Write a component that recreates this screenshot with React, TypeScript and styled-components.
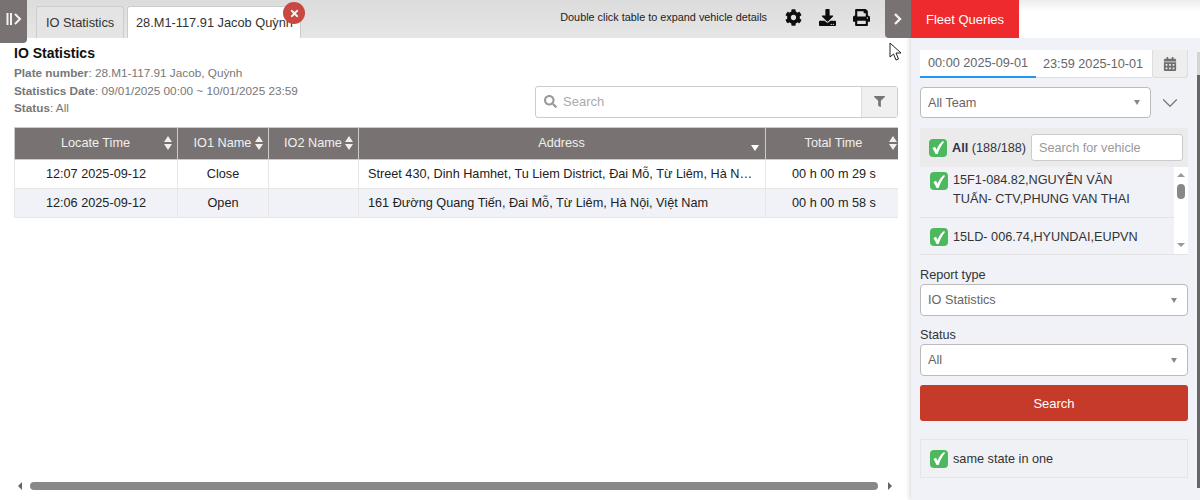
import { FaCalendarAlt, FaCog, FaDownload, FaFilter, FaPrint, FaSearch, FaTimes } from "react-icons/fa"
import { FiChevronDown } from "react-icons/fi"
import styled, { createGlobalStyle } from "styled-components"

const GlobalStyle = createGlobalStyle`
  html, body {
    margin: 0;
    height: 500px;
    overflow: hidden;
    background: #fff;
    font-family: "Liberation Sans", Arial, sans-serif;
  }
  * { box-sizing: border-box; }
`

const Page = styled.div`
  position: relative;
  display: flex;
  width: 1200px;
  height: 500px;
  overflow: hidden;
`

const Main = styled.div`
  width: 911px;
  display: flex;
  flex-direction: column;
`

const TopBar = styled.div`
  height: 38px;
  display: flex;
  align-items: flex-start;
  background: linear-gradient(#dcdcdc, #e6e6e6);
`

const EdgeButton = styled.div<{ $side: "left" | "right" }>`
  width: ${(p) => (p.$side === "left" ? "27px" : "26px")};
  height: ${(p) => (p.$side === "left" ? "43px" : "38px")};
  padding-bottom: ${(p) => (p.$side === "left" ? "5px" : "0")};
  background: #787372;
  color: #f2f2f2;
  display: flex;
  align-items: center;
  justify-content: center;
  z-index: 2;
  border-radius: ${(p) => (p.$side === "left" ? "0 0 4px 0" : "0 0 0 4px")};
  flex: none;
`

const Tabs = styled.div`
  display: flex;
  gap: 3px;
  padding: 6px 0 0 9px;
`

const Tab = styled.div<{ $active?: boolean }>`
  position: relative;
  width: ${(p) => (p.$active ? "174px" : "88px")};
  height: 32px;
  padding: 0 ${(p) => (p.$active ? "8px" : "9px")};
  display: flex;
  align-items: center;
  font-size: 12.8px;
  color: #333;
  white-space: nowrap;
  border: 1px solid #ccc;
  border-bottom: 0;
  border-radius: 3px 3px 0 0;
  background: ${(p) => (p.$active ? "#fff" : "#e4e4e4")};
`

const CloseBadge = styled.span`
  position: absolute;
  top: -5px;
  right: -5px;
  width: 22px;
  height: 22px;
  border-radius: 50%;
  background: #c9483f;
  color: #f4f4f4;
  display: flex;
  align-items: center;
  justify-content: center;
  font-size: 11px;
`

const Hint = styled.div`
  margin-left: auto;
  height: 34px;
  display: flex;
  align-items: center;
  gap: 18px;
  font-size: 10.85px;
  color: #222;
`

const HintIcons = styled.div`
  display: flex;
  align-items: center;
  gap: 17px;
  font-size: 17px;
  color: #0d0d0d;
  margin-right: 15px;
`

const Content = styled.div`
  flex: 1;
  padding: 7px 13px 0 14px;
  min-height: 0;
`

const Title = styled.h1`
  margin: 0 0 2px;
  font-size: 14px;
  line-height: 17px;
  font-weight: 700;
  color: #111;
`

const InfoRow = styled.div`
  display: flex;
  justify-content: space-between;
  align-items: flex-end;
  margin-bottom: 9px;
`

const MetaBlock = styled.div`
  padding-bottom: 1px;
`

const MetaLine = styled.div`
  font-size: 11.75px;
  line-height: 17.5px;
  color: #777;
  b { font-weight: 700; }
`

const SearchBox = styled.div`
  width: 363px;
  height: 32px;
  display: flex;
  align-items: center;
  border: 1px solid #ccc;
  border-radius: 3px;
  background: #fff;
  color: #999;
  font-size: 13px;
`

const SearchLabel = styled.div`
  flex: 1;
  display: flex;
  align-items: center;
  gap: 6px;
  padding-left: 8px;
  color: #aaa;
  svg { color: #999; }
`

const FilterButton = styled.div`
  width: 36px;
  height: 100%;
  display: flex;
  align-items: center;
  justify-content: center;
  background: #f0f0f0;
  border-left: 1px solid #ddd;
  color: #777;
  font-size: 11px;
`

const TableClip = styled.div`
  width: 884px;
  overflow: hidden;
`

const Table = styled.table`
  width: 888px;
  border-collapse: collapse;
  table-layout: fixed;
  font-size: 12.7px;
  color: #222;
`

const Th = styled.th`
  position: relative;
  height: 32px;
  padding: 0 9px 0 8px;
  background: #787372;
  color: #f0f0f0;
  font-size: 12.7px;
  font-weight: 400;
  border: 1px solid #ccc;
`

const SortMark = styled.span<{ $right: number }>`
  position: absolute;
  top: 8px;
  right: ${(p) => p.$right}px;
  display: flex;
  flex-direction: column;
  gap: 2px;
`

const DownMark = styled.span`
  position: absolute;
  bottom: 8px;
  right: 6px;
  width: 0;
  height: 0;
  border: 4px solid transparent;
  border-top: 6px solid #fff;
  border-bottom: 0;
`

const Arrow = styled.i<{ $up?: boolean }>`
  display: block;
  width: 0;
  height: 0;
  border-left: 4px solid transparent;
  border-right: 4px solid transparent;
  ${(p) => (p.$up ? "border-bottom: 6px solid #f0f0f0;" : "border-top: 6px solid #f0f0f0;")}
`

const Row = styled.tr<{ $odd?: boolean }>`
  background: ${(p) => (p.$odd ? "#f0f2f7" : "#fff")};
`

const Td = styled.td<{ $left?: boolean }>`
  height: 29px;
  padding: ${(p) => (p.$left ? "0 11px 0 9px" : "0 9px")};
  text-align: ${(p) => (p.$left ? "left" : "center")};
  border: 1px solid #e6e6e6;
  white-space: nowrap;
  overflow: hidden;
  text-overflow: ellipsis;
`

const HScroll = styled.div`
  height: 22px;
  padding: 0 19px 6px 18px;
  display: flex;
  align-items: center;
  gap: 8px;
`

const HThumb = styled.div`
  flex: 1;
  height: 8px;
  margin-right: 2px;
  border-radius: 4px;
  background: #888;
`

const ScrollArrow = styled.i<{ $dir: "left" | "right" | "up" | "down" }>`
  display: block;
  width: 0;
  height: 0;
  flex: none;
  ${(p) => p.$dir === "left" && "border-top: 4px solid transparent; border-bottom: 4px solid transparent; border-right: 4px solid #666;"}
  ${(p) => p.$dir === "right" && "border-top: 4px solid transparent; border-bottom: 4px solid transparent; border-left: 4px solid #666;"}
  ${(p) => p.$dir === "up" && "border-left: 4px solid transparent; border-right: 4px solid transparent; border-bottom: 4px solid #999;"}
  ${(p) => p.$dir === "down" && "border-left: 4px solid transparent; border-right: 4px solid transparent; border-top: 4px solid #999;"}
`

const Panel = styled.aside`
  width: 289px;
  display: flex;
  flex-direction: column;
  box-shadow: -2px 0 4px rgba(0, 0, 0, 0.12);
  z-index: 1;
`

const PanelHead = styled.div`
  height: 38px;
  flex: none;
  background: linear-gradient(#ececec, #fff 30%);
`

const RedTab = styled.div`
  width: 108px;
  height: 38px;
  background: #ee2a2c;
  color: #fff;
  font-size: 13px;
  display: flex;
  align-items: center;
  justify-content: center;
`

const PanelBody = styled.div`
  flex: 1;
  background: #f0f2f7;
  display: flex;
  flex-direction: column;
  padding: 12px 12px 0 9px;
  position: relative;
`

const PanelScroll = styled.div`
  position: absolute;
  top: 14px;
  right: 0;
  width: 3px;
  height: 436px;
  background: linear-gradient(#d4d4d4 23px, #666 23px);
`

const DateRow = styled.div`
  display: flex;
  height: 28px;
  margin-bottom: 9px;
`

const DateInput = styled.div<{ $focus?: boolean }>`
  width: 116px;
  background: #fff;
  font-size: 12.7px;
  color: #666;
  display: flex;
  align-items: center;
  padding-left: ${(p) => (p.$focus ? "8px" : "7px")};
  border-bottom: 1px solid #ddd;
  ${(p) => p.$focus && "border-bottom: 2px solid #2196f3;"}
`

const CalendarButton = styled.div`
  flex: 1;
  display: flex;
  align-items: center;
  justify-content: center;
  background: #eee;
  border: 1px solid #ddd;
  border-top: 0;
  border-radius: 0 0 3px 3px;
  color: #6e6e70;
  font-size: 14px;
`

const TeamRow = styled.div`
  display: flex;
  align-items: center;
  margin-bottom: 10px;
`

const Select = styled.div<{ $wide?: boolean }>`
  width: ${(p) => (p.$wide ? "268px" : "231px")};
  height: ${(p) => (p.$wide ? "32px" : "31px")};
  padding: 0 8px 0 7px;
  display: flex;
  align-items: center;
  justify-content: space-between;
  background: #fff;
  border: 1px solid #bbb;
  border-radius: 4px;
  font-size: 12.7px;
  color: #666;
`

const Caret = styled.i`
  width: 0;
  height: 0;
  border-left: 3.5px solid transparent;
  border-right: 3.5px solid transparent;
  border-top: 5px solid #888;
  margin-right: 2px;
`

const ChevronSlot = styled.div`
  flex: 1;
  display: flex;
  justify-content: center;
  color: #777;
  font-size: 26px;
`

const VehicleHead = styled.div`
  height: 39px;
  display: flex;
  align-items: center;
  gap: 5px;
  padding: 0 5px 0 9px;
  background: #ebebeb;
  font-size: 12.7px;
  color: #334;
  b { font-weight: 700; }
`

const Check = styled.span`
  width: 18px;
  height: 18px;
  flex: none;
  border-radius: 4px;
  background: #4eb85f;
  display: flex;
  align-items: center;
  justify-content: center;
`

const VehicleSearch = styled.div`
  margin-left: auto;
  width: 152px;
  height: 27px;
  padding-left: 7px;
  display: flex;
  align-items: center;
  background: #fff;
  border: 1px solid #ccc;
  border-radius: 3px;
  color: #999;
  font-size: 12.7px;
`

const VehicleList = styled.div`
  height: 88px;
  display: flex;
  overflow: hidden;
  border-bottom: 1px solid #e3e3e3;
  margin-bottom: 10px;
`

const VehicleItems = styled.div`
  flex: 1;
  overflow: hidden;
`

const VehicleItem = styled.div`
  display: flex;
  gap: 5px;
  padding: 4px 25px 8px 10px;
  font-size: 12.7px;
  line-height: 19px;
  color: #333;
  ${Check} { margin-top: 1px; }
  & + & {
    border-top: 1px solid #e3e3e3;
    padding-top: 10px;
  }
  & + & ${Check} { margin-top: 0; }
`

const VScroll = styled.div`
  width: 14px;
  flex: none;
  background: #fff;
  display: flex;
  flex-direction: column;
  align-items: center;
  padding: 6px 0 7px;
`

const VThumb = styled.div`
  width: 8px;
  height: 15px;
  margin-top: 7px;
  border-radius: 4px;
  background: #888;
  margin-bottom: auto;
`

const FieldLabel = styled.div`
  font-size: 12.7px;
  line-height: 14px;
  color: #333;
  margin: 3px 0 2px;
`

const Field = styled.div`
  margin-bottom: 9px;
`

const SearchButton = styled.div`
  height: 36px;
  margin-bottom: 18px;
  border-radius: 3px;
  background: #c63a2a;
  color: #fff;
  font-size: 13px;
  display: flex;
  align-items: center;
  justify-content: center;
`

const SameState = styled.div`
  height: 39px;
  display: flex;
  align-items: center;
  gap: 5px;
  padding-left: 9px;
  background: #eff1f5;
  border: 1px solid #e4e5e8;
  font-size: 12.7px;
  color: #333;
`

const Cursor = styled.svg`
  position: absolute;
  left: 889px;
  top: 42px;
  z-index: 3;
`

const rows = [
  { time: "12:07 2025-09-12", io: "Close", address: "Street 430, Dinh Hamhet, Tu Liem District, Đai Mỗ, Từ Liêm, Hà Nội, Việt Nam", total: "00 h 00 m 29 s" },
  { time: "12:06 2025-09-12", io: "Open", address: "161 Đường Quang Tiến, Đai Mỗ, Từ Liêm, Hà Nội, Việt Nam", total: "00 h 00 m 58 s" },
]

function Sort({ right }: { right: number }) {
  return (
    <SortMark $right={right}>
      <Arrow $up />
      <Arrow />
    </SortMark>
  )
}

function Tick() {
  return (
    <Check>
      <svg width="14" height="15" viewBox="0 0 14 15" fill="#fff">
        <path d="M1.5 8 L4 6.8 L5.6 9.8 C7 6 9 3 12 1 L13 2 C10.5 5 8 9.5 6.6 14 L4.6 14 Z" />
      </svg>
    </Check>
  )
}

export default function App() {
  return (
    <Page>
      <GlobalStyle />
      <Main>
        <TopBar>
          <EdgeButton $side="left">
            <svg width="16" height="14" viewBox="0 0 16 14" fill="none" stroke="#f2f2f2" strokeWidth="2">
              <path d="M1.5 1v12M5 1v12M9 2l5 5-5 5" />
            </svg>
          </EdgeButton>
          <Tabs>
            <Tab>IO Statistics</Tab>
            <Tab $active>
              28.M1-117.91 Jacob Quỳnh
              <CloseBadge>
                <FaTimes />
              </CloseBadge>
            </Tab>
          </Tabs>
          <Hint>
            Double click table to expand vehicle details
            <HintIcons>
              <FaCog />
              <FaDownload />
              <FaPrint />
            </HintIcons>
          </Hint>
          <EdgeButton $side="right">
            <svg width="10" height="14" viewBox="0 0 10 14" fill="none" stroke="#f2f2f2" strokeWidth="2.4">
              <path d="M2 2l5 5-5 5" />
            </svg>
          </EdgeButton>
        </TopBar>
        <Content>
          <Title>IO Statistics</Title>
          <InfoRow>
            <MetaBlock>
              <MetaLine><b>Plate number</b>: 28.M1-117.91 Jacob, Quỳnh</MetaLine>
              <MetaLine><b>Statistics Date</b>: 09/01/2025 00:00 ~ 10/01/2025 23:59</MetaLine>
              <MetaLine><b>Status</b>: All</MetaLine>
            </MetaBlock>
            <SearchBox>
              <SearchLabel>
                <FaSearch />
                Search
              </SearchLabel>
              <FilterButton>
                <FaFilter />
              </FilterButton>
            </SearchBox>
          </InfoRow>
          <TableClip>
            <Table>
              <colgroup>
                <col width="163" />
                <col width="91" />
                <col width="90" />
                <col width="407" />
                <col width="137" />
              </colgroup>
              <thead>
                <tr>
                  <Th>Locate Time<Sort right={5} /></Th>
                  <Th>IO1 Name<Sort right={5} /></Th>
                  <Th>IO2 Name<Sort right={5} /></Th>
                  <Th>Address<DownMark /></Th>
                  <Th>Total Time<Sort right={5} /></Th>
                </tr>
              </thead>
              <tbody>
                {rows.map((row, i) => (
                  <Row key={row.time} $odd={i % 2 === 1}>
                    <Td>{row.time}</Td>
                    <Td>{row.io}</Td>
                    <Td />
                    <Td $left>{row.address}</Td>
                    <Td>{row.total}</Td>
                  </Row>
                ))}
              </tbody>
            </Table>
          </TableClip>
        </Content>
        <HScroll>
          <ScrollArrow $dir="left" />
          <HThumb />
          <ScrollArrow $dir="right" />
        </HScroll>
      </Main>
      <Panel>
        <PanelHead>
          <RedTab>Fleet Queries</RedTab>
        </PanelHead>
        <PanelBody>
          <PanelScroll />
          <DateRow>
            <DateInput $focus>00:00 2025-09-01</DateInput>
            <DateInput>23:59 2025-10-01</DateInput>
            <CalendarButton>
              <FaCalendarAlt />
            </CalendarButton>
          </DateRow>
          <TeamRow>
            <Select>
              All Team
              <Caret />
            </Select>
            <ChevronSlot>
              <FiChevronDown strokeWidth={1.1} />
            </ChevronSlot>
          </TeamRow>
          <VehicleHead>
            <Tick />
            <span><b>All</b> (188/188)</span>
            <VehicleSearch>Search for vehicle</VehicleSearch>
          </VehicleHead>
          <VehicleList>
            <VehicleItems>
              <VehicleItem>
                <Tick />
                <span>15F1-084.82,NGUYỄN VĂN TUẤN- CTV,PHUNG VAN THAI</span>
              </VehicleItem>
              <VehicleItem>
                <Tick />
                <span>15LD- 006.74,HYUNDAI,EUPVN</span>
              </VehicleItem>
            </VehicleItems>
            <VScroll>
              <ScrollArrow $dir="up" />
              <VThumb />
              <ScrollArrow $dir="down" />
            </VScroll>
          </VehicleList>
          <Field>
            <FieldLabel>Report type</FieldLabel>
            <Select $wide>IO Statistics<Caret /></Select>
          </Field>
          <Field>
            <FieldLabel>Status</FieldLabel>
            <Select $wide>All<Caret /></Select>
          </Field>
          <SearchButton>Search</SearchButton>
          <SameState>
            <Tick />
            same state in one
          </SameState>
        </PanelBody>
      </Panel>
      <Cursor width="14" height="20" viewBox="0 0 14 20">
        <path d="M1 1v14l3.5-3 2.5 6 2.5-1-2.5-6h5z" fill="#fff" stroke="#222" strokeWidth="1" />
      </Cursor>
    </Page>
  )
}
